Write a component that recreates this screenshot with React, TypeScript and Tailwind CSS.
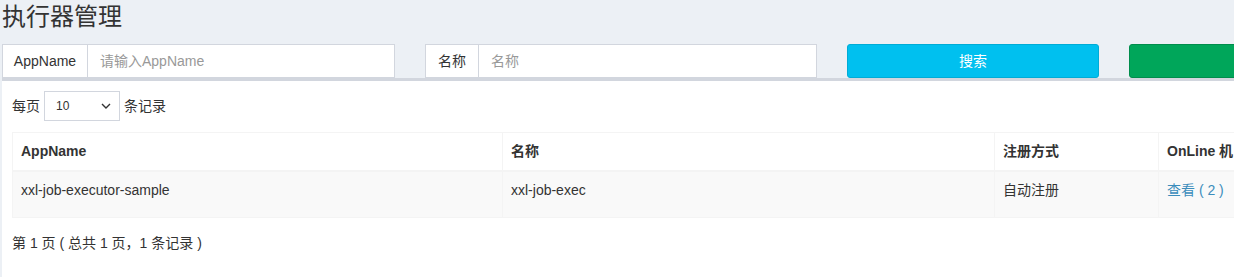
import React from "react";

const font = { fontFamily: '"Liberation Sans", "Noto Sans CJK SC", Arial, sans-serif' };

export default function App() {
  return (
    <div
      className="w-[1234px] h-[277px] overflow-hidden bg-[#ecf0f5] text-[#333] text-[14px] leading-[20px]"
      style={font}
    >
      <h1 className="pl-[2px] pt-[3px] text-[24px] leading-[28px] font-normal text-[#333] m-0">执行器管理</h1>
      <div className="flex pl-[2px] gap-[30px] mt-[13px] w-[2000px]">
        <div className="flex w-[393px] h-[34px] shrink-0">
          <span className="flex items-center justify-center w-[86px] border border-[#d2d6de] bg-white text-[#333] shrink-0 whitespace-nowrap">AppName</span>
          <div className="flex-1 flex items-center px-[12px] border border-l-0 border-[#d2d6de] bg-white text-[#999]">请输入AppName</div>
        </div>
        <div className="flex w-[392px] h-[34px] shrink-0">
          <span className="flex items-center px-[12px] border border-[#d2d6de] bg-white text-[#333] shrink-0 whitespace-nowrap">名称</span>
          <div className="flex-1 flex items-center px-[12px] border border-l-0 border-[#d2d6de] bg-white text-[#999]">名称</div>
        </div>
        <button className="w-[252px] h-[34px] shrink-0 rounded-[3px] bg-[#00c0ef] border border-[#00acd6] text-white">搜索</button>
        <button className="w-[252px] h-[34px] shrink-0 rounded-[3px] bg-[#00a65a] border border-[#008d4c] text-white"></button>
      </div>
      <div className="ml-[2px] border-t-[3px] border-[#d2d6de] bg-white w-[1800px] h-[200px] p-[10px]">
        <div className="flex items-center h-[30px]">
          <span>每页</span>
          <div className="ml-[4px] w-[76px] h-[30px] border border-[#d2d6de] flex items-center justify-between pl-[11px] pr-[6px] text-[12px]">
            <span>10</span>
            <svg width="10" height="6" viewBox="0 0 10 6" className="mr-[2px]">
              <path d="M1 1 L5 5 L9 1" fill="none" stroke="#333" strokeWidth="1.4" />
            </svg>
          </div>
          <span className="ml-[4px]">条记录</span>
        </div>
        <table className="mt-[11px] table-fixed border-collapse border border-[#f4f4f4] w-[1700px]">
          <colgroup>
            <col className="w-[490px]" />
            <col className="w-[492px]" />
            <col className="w-[164px]" />
            <col className="w-[250px]" />
            <col className="w-[304px]" />
          </colgroup>
          <thead>
            <tr className="bg-white">
              <th className="text-left font-bold p-[8px] border border-[#f4f4f4] border-b-2 h-[38px] whitespace-nowrap">AppName</th>
              <th className="text-left font-bold p-[8px] border border-[#f4f4f4] border-b-2 whitespace-nowrap">名称</th>
              <th className="text-left font-bold p-[8px] border border-[#f4f4f4] border-b-2 whitespace-nowrap">注册方式</th>
              <th className="text-left font-bold p-[8px] border border-[#f4f4f4] border-b-2 whitespace-nowrap">OnLine 机</th>
              <th className="text-left font-bold p-[8px] border border-[#f4f4f4] border-b-2 whitespace-nowrap"></th>
            </tr>
          </thead>
          <tbody>
            <tr className="bg-[#f9f9f9]">
              <td className="align-top p-[8px] border border-[#f4f4f4] h-[47px]">xxl-job-executor-sample</td>
              <td className="align-top p-[8px] border border-[#f4f4f4]">xxl-job-exec</td>
              <td className="align-top p-[8px] border border-[#f4f4f4]">自动注册</td>
              <td className="align-top p-[8px] border border-[#f4f4f4]">
                <a className="text-[#3c8dbc]">查看 ( 2 )</a>
              </td>
              <td className="align-top p-[8px] border border-[#f4f4f4]"></td>
            </tr>
          </tbody>
        </table>
        <div className="mt-[15px]">第 1 页 ( 总共 1 页，1 条记录 )</div>
      </div>
    </div>
  );
}
